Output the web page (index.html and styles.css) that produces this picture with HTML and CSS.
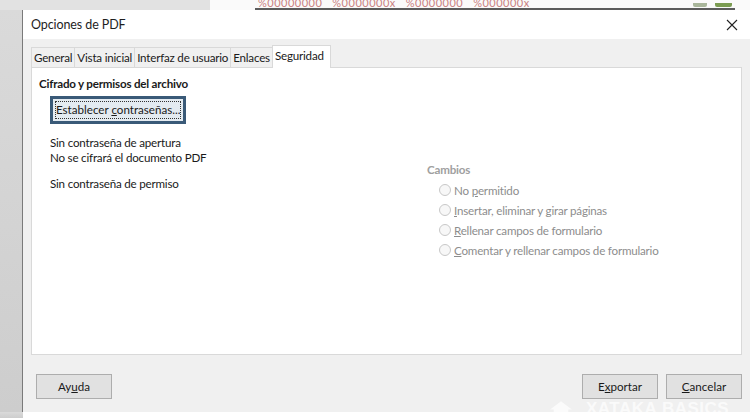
FILE: index.html
```html
<!DOCTYPE html>
<html lang="es">
<head>
    <meta charset="UTF-8">
    <title>Opciones de PDF</title>
    <link rel="stylesheet" href="styles.css">
</head>
<body>
    <div class="desk">
        <!-- window behind the dialog -->
        <div class="backbar">
            <div class="back-left"></div>
            <div class="back-sheet">
                <span class="back-cells">%00000000&nbsp;&nbsp;&nbsp;%0000000x&nbsp;&nbsp;&nbsp;%0000000&nbsp;&nbsp;&nbsp;%000000x</span>
                <span class="back-btn grey"></span>
                <span class="back-btn green"></span>
            </div>
        </div>

        <div class="row">
            <div class="side"></div>
            <div class="dialog">
                <div class="titlebar">
                    <span class="title">Opciones de PDF</span>
                    <svg class="close" width="12" height="12" viewBox="0 0 12 12">
                        <path d="M1 1 L11 11 M11 1 L1 11" stroke="#222" stroke-width="1.1" fill="none"/>
                    </svg>
                </div>

                <div class="dialog-body">
                    <div class="tabs">
                        <div class="tab">General</div>
                        <div class="tab">Vista inicial</div>
                        <div class="tab">Interfaz de usuario</div>
                        <div class="tab">Enlaces</div>
                        <div class="tab active">Seguridad</div>
                    </div>

                    <div class="panel">
                        <div class="col-left">
                            <div class="section-title">Cifrado y permisos del archivo</div>
                            <button class="pw-btn"><span class="focus">Establecer <u>c</u>ontraseñas...</span></button>
                            <div class="status">
                                <div>Sin contraseña de apertura</div>
                                <div>No se cifrará el documento PDF</div>
                            </div>
                            <div class="status">
                                <div>Sin contraseña de permiso</div>
                            </div>
                        </div>
                        <div class="col-right">
                            <div class="group-title">Cambios</div>
                            <label class="radio"><span class="dot"></span><span>No <u>p</u>ermitido</span></label>
                            <label class="radio"><span class="dot"></span><span><u>I</u>nsertar, eliminar y girar páginas</span></label>
                            <label class="radio"><span class="dot"></span><span><u>R</u>ellenar campos de formulario</span></label>
                            <label class="radio"><span class="dot"></span><span><u>C</u>omentar y rellenar campos de formulario</span></label>
                        </div>
                    </div>

                    <div class="footer">
                        <button class="btn">Ay<u>u</u>da</button>
                        <div class="spacer"></div>
                        <button class="btn">E<u>x</u>portar</button>
                        <button class="btn"><u>C</u>ancelar</button>
                    </div>
                </div>
            </div>
        </div>
        <div class="bottom">
            <div class="side"></div>
        </div>

        <div class="watermark">
            <svg width="22" height="15" viewBox="0 0 24 16">
                <path d="M12 0 L24 9 L20 9 L20 16 L4 16 L4 9 L0 9 Z" fill="rgba(255,255,255,0.7)"/>
            </svg>
            <span>XATAKA BASICS</span>
        </div>
    </div>
</body>
</html>
```

FILE: styles.css
```css
:root {
    --dlg-bg: #f0f0f0;
    --border: #d9d9d9;
    --btn-bg: #e1e1e1;
    --btn-border: #adadad;
    --text: #1a1a1a;
    --disabled: #8d8d8d;
}
* { margin: 0; padding: 0; box-sizing: border-box; }
body { width: 750px; height: 418px; overflow: hidden; background: #fff; font-family: Lato, 'Noto Sans', sans-serif; font-size: 11.6px; letter-spacing: -0.2px; color: var(--text); }
.desk { position: relative; width: 750px; height: 418px; overflow: hidden; display: flex; flex-direction: column; }

.backbar { height: 10px; display: flex; }
.back-left { width: 210px; background: #e2e2e2; }
.back-sheet { flex: 1; position: relative; background: #fafafa; display: flex; align-items: flex-end; overflow: hidden; }
.back-sheet::after { content: ''; position: absolute; left: 45px; right: 15px; bottom: 0; height: 2px; background: #5c5c5c; }
.back-cells { margin-left: 48px; color: #c98080; font-size: 11px; line-height: 10px; transform: translateY(-2px); letter-spacing: 0.5px; white-space: nowrap; }
.back-btn { position: absolute; bottom: 3px; height: 4px; border-radius: 0 0 2px 2px; }
.back-btn.grey { left: 483px; width: 14px; background: #a9b69b; }
.back-btn.green { left: 505px; width: 17px; background: #7b9c52; }

.row { display: flex; height: 402px; }
.side { width: 23px; background: linear-gradient(#dadada, #cdcdcd); border-right: 1px solid #7a7a7a; }
.dialog { flex: 1; display: flex; flex-direction: column; }

.titlebar { height: 29px; background: #fff; display: flex; align-items: center; padding: 0 12px 0 8px; }
.title { flex: 1; font-size: 12.5px; letter-spacing: -0.1px; color: #1e1e1e; }
.close { display: block; }

.dialog-body { flex: 1; background: var(--dlg-bg); padding: 6px 8px 0 8px; display: flex; flex-direction: column; }

.tabs { display: flex; align-items: flex-end; height: 22px; }
.tab { height: 20px; padding: 0 2px; display: flex; align-items: center; border: 1px solid var(--border); border-bottom: none; margin-right: -1px; background: var(--dlg-bg); white-space: nowrap; }
.active { height: 23px; background: #fff; position: relative; z-index: 1; margin-bottom: -1px; padding: 0 6px 4px 2px; }

.panel { height: 288px; background: #fff; border: 1px solid var(--border); display: grid; grid-template-columns: 388px 1fr; }
.col-left { padding: 9px 0 0 7px; }
.section-title { font-weight: bold; }
.pw-btn { display: block; margin: 6px 0 0 11px; width: 136px; height: 28px; border: 3px solid #3a5a78; background: #e4ebf1; font: inherit; color: var(--text); padding: 2px; }
.focus { display: block; height: 100%; border: 1px dotted #333; line-height: 16px; text-align: center; white-space: nowrap; }
.status { margin: 11px 0 0 11px; line-height: 15px; }
.status + .status { margin-top: 11px; }

.col-right { padding: 95px 0 0 7px; color: var(--disabled); }
.group-title { font-weight: bold; color: #a0a0a0; margin-bottom: 4px; }
.radio { display: flex; align-items: center; height: 20px; padding-left: 12px; gap: 3px; white-space: nowrap; }
.dot { width: 12px; height: 12px; border-radius: 50%; border: 1px solid #c8c8c8; background: #f7f7f7; }

.footer { display: flex; gap: 8px; padding: 19px 0 0 5px; }
.spacer { flex: 1; }
.btn { width: 76px; height: 25px; background: var(--btn-bg); border: 1px solid var(--btn-border); font: inherit; color: var(--text); }

.bottom { flex: 1; display: flex; }
.bottom .side { border-right: none; }

.watermark { position: absolute; left: 550px; top: 401px; display: flex; align-items: center; gap: 14px; color: rgba(255,255,255,0.7); font-family: 'Liberation Sans', sans-serif; font-weight: bold; font-size: 17px; line-height: 15px; letter-spacing: 0.5px; }
```
